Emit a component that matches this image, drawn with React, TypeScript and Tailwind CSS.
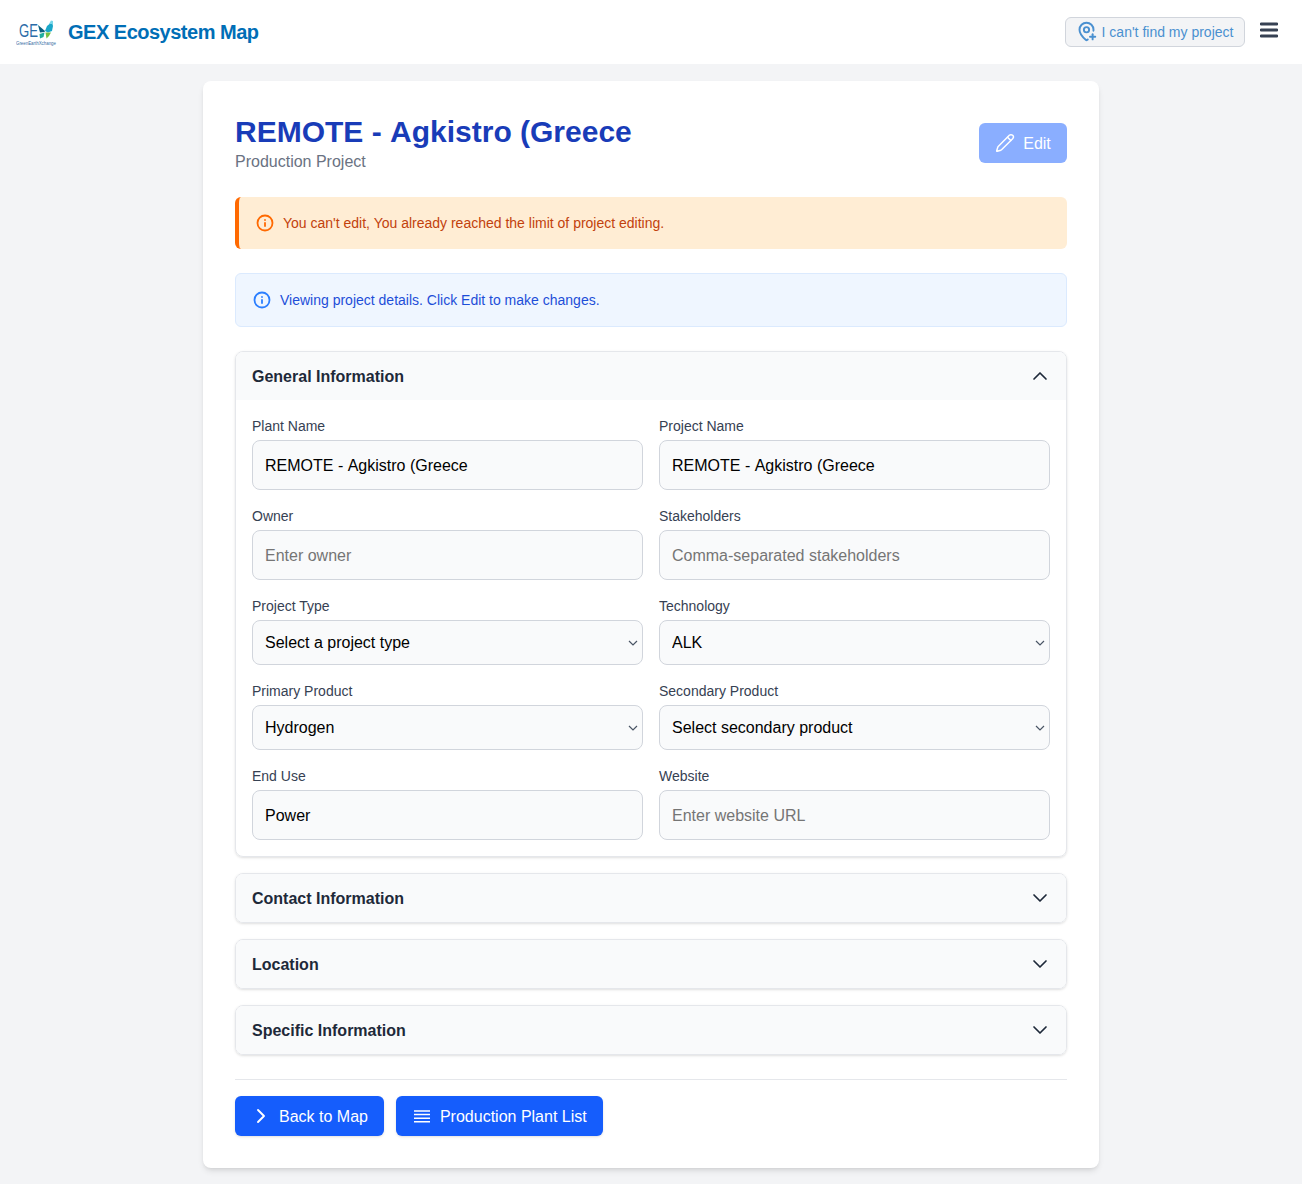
import React from "react";
import { ChevronDown, ChevronUp, ChevronRight, Info, Pencil, MapPinPlus } from "lucide-react";

const inputCls =
  "w-full pt-[13px] pb-[11px] px-3 leading-6 rounded-lg border border-gray-300 bg-gray-50 text-base text-black placeholder:text-[#757575] outline-none";
const selectCls =
  "w-full h-[45px] pl-3 pr-6 appearance-none rounded-lg border border-gray-300 bg-gray-50 text-base text-black opacity-100 outline-none";

function Field({ label, value, placeholder }: { label: string; value?: string; placeholder?: string }) {
  return (
    <div>
      <label className="block text-sm leading-5 text-gray-700 mb-1">{label}</label>
      <input className={inputCls} disabled value={value ?? ""} placeholder={placeholder} onChange={() => {}} />
    </div>
  );
}

function SelectField({ label, value }: { label: string; value: string }) {
  return (
    <div>
      <label className="block text-sm leading-5 text-gray-700 mb-1">{label}</label>
      <div className="relative">
        <select className={selectCls} value={value} disabled onChange={() => {}}>
          <option value={value}>{value}</option>
        </select>
        <svg width="10" height="6" viewBox="0 0 10 6" fill="none" className="absolute right-[5px] top-[20px] text-gray-600">
          <path d="M1 1l4 4 4-4" stroke="currentColor" strokeWidth="1.2" />
        </svg>
      </div>
    </div>
  );
}

function SectionHead({ title, open }: { title: string; open?: boolean }) {
  const Icon = open ? ChevronUp : ChevronDown;
  return (
    <div className="h-12 flex items-center justify-between px-4 bg-gray-50">
      <span className="pt-px font-semibold text-base text-gray-800">{title}</span>
      <Icon className="w-6 h-6 -mr-[2px] text-gray-800" strokeWidth={1.7} />
    </div>
  );
}

function Section({ title }: { title: string }) {
  return (
    <div className="rounded-lg border border-gray-200 shadow-sm overflow-hidden">
      <SectionHead title={title} />
    </div>
  );
}

function Logo() {
  return (
    <svg width="42" height="30" viewBox="0 0 42 30" className="shrink-0">
      <text x="3" y="20" fontSize="19" fontFamily="'Liberation Sans', sans-serif" fill="#2b6ca8" textLength="19" lengthAdjust="spacingAndGlyphs">
        GE
      </text>
      <path d="M22 8 L29 14 L28.5 15 L24 15.5 Z" fill="#0b5f80" />
      <path d="M29 14 L31 9 L36 5 L37 9 L36 14 L32 15.5 Z" fill="#1aa7c9" />
      <path d="M33 7 L35 3.5 L37 4 L37 7 Z" fill="#7ad7ea" />
      <path d="M28.5 15.5 L27.5 20 L24 21.5 L23.5 17 Z" fill="#1fae9e" />
      <path d="M29.5 15.5 L35 15.5 L33 19 L30.5 21.5 Z" fill="#74c043" />
      <text x="0" y="28" fontSize="4.6" fontFamily="'Liberation Sans', sans-serif" fill="#3a6ea5" textLength="40" lengthAdjust="spacingAndGlyphs">
        GreenEarthXchange
      </text>
    </svg>
  );
}

export default function App() {
  return (
    <div className="min-h-[1184px] bg-gray-100 font-['Liberation_Sans',Arial,sans-serif]">
      <header className="h-16 bg-white flex items-center justify-between pl-4 pr-6">
        <div className="flex items-center gap-3 -mt-px">
          <Logo />
          <span className="-ml-[2px] text-xl font-bold tracking-tight text-[#006eb6]">GEX Ecosystem Map</span>
        </div>
        <div className="flex items-center gap-[15px] -mt-[1px]">
          <button className="h-[30px] w-[180px] flex items-center justify-center gap-[5px] rounded-md border border-gray-300 bg-gray-100 text-sm text-[#4a90d0]">
            <MapPinPlus className="w-[21px] h-[21px] -ml-px" strokeWidth={2.2} />
            I can't find my project
          </button>
          <svg width="18" height="16" viewBox="0 0 18 16" className="text-gray-700 -mt-[3px]">
            <path d="M1 2h16M1 8h16M1 14h16" stroke="currentColor" strokeWidth="2.8" strokeLinecap="round" fill="none" />
          </svg>
        </div>
      </header>

      <main className="pt-[17px] pb-4">
        <div className="mx-auto w-[896px] bg-white rounded-lg shadow-md p-8">
          <div className="flex items-start justify-between mb-[23px]">
            <div className="pt-[1px]">
              <h1 className="text-3xl leading-9 font-bold text-blue-800">REMOTE -{"\u00A0"}Agkistro (Greece</h1>
              <p className="text-base leading-6 text-gray-500">Production Project</p>
            </div>
            <button className="mt-[10px] w-[88px] h-10 flex items-center justify-center gap-2 rounded-md bg-[#8aaeff] text-white text-base">
              <Pencil className="w-5 h-5" strokeWidth={1.75} />
              <span className="pt-px">Edit</span>
            </button>
          </div>

          <div className="h-[52px] flex items-center gap-2 pl-[17px] rounded-md border-l-4 border-orange-500 bg-orange-100 text-sm text-[#c2410c] mb-6">
            <Info className="w-[18px] h-[18px] text-orange-500" strokeWidth={2.4} />
            <span className="ml-px">You can't edit, You already reached the limit of project editing.</span>
          </div>

          <div className="h-[54px] flex items-center gap-2 pl-[17px] rounded-md border border-blue-100 bg-blue-50 text-sm text-[#1d4ed8] mb-6">
            <Info className="w-[18px] h-[18px] text-blue-500" strokeWidth={2.4} />
            <span className="ml-px">Viewing project details. Click Edit to make changes.</span>
          </div>

          <div className="flex flex-col gap-4">
            <div className="rounded-lg border border-gray-200 shadow-sm overflow-hidden">
              <SectionHead title="General Information" open />
              <div className="grid grid-cols-2 gap-4 p-4">
                <Field label="Plant Name" value={"REMOTE -\u00A0Agkistro (Greece"} />
                <Field label="Project Name" value={"REMOTE -\u00A0Agkistro (Greece"} />
                <Field label="Owner" placeholder="Enter owner" />
                <Field label="Stakeholders" placeholder="Comma-separated stakeholders" />
                <SelectField label="Project Type" value="Select a project type" />
                <SelectField label="Technology" value="ALK" />
                <SelectField label="Primary Product" value="Hydrogen" />
                <SelectField label="Secondary Product" value="Select secondary product" />
                <Field label="End Use" value="Power" />
                <Field label="Website" placeholder="Enter website URL" />
              </div>
            </div>
            <Section title="Contact Information" />
            <Section title="Location" />
            <Section title="Specific Information" />
          </div>

          <div className="mt-6 pt-4 border-t border-gray-200 flex gap-3">
            <button className="h-10 px-4 flex items-center gap-2 rounded-md bg-blue-600 text-white text-base shadow-sm">
              <ChevronRight className="w-6 h-6 -mx-[2px]" strokeWidth={1.9} />
              <span className="pt-px">Back to Map</span>
            </button>
            <button className="h-10 px-4 flex items-center gap-2 rounded-md bg-blue-600 text-white text-base shadow-sm">
              <svg width="20" height="20" viewBox="0 0 20 20" fill="none" stroke="currentColor" strokeWidth="1.5">
                <path d="M2 5h16M2 8.6h16M2 12.2h16M2 15.8h16" />
              </svg>
              <span className="pt-px">Production Plant List</span>
            </button>
          </div>
        </div>
      </main>
    </div>
  );
}
